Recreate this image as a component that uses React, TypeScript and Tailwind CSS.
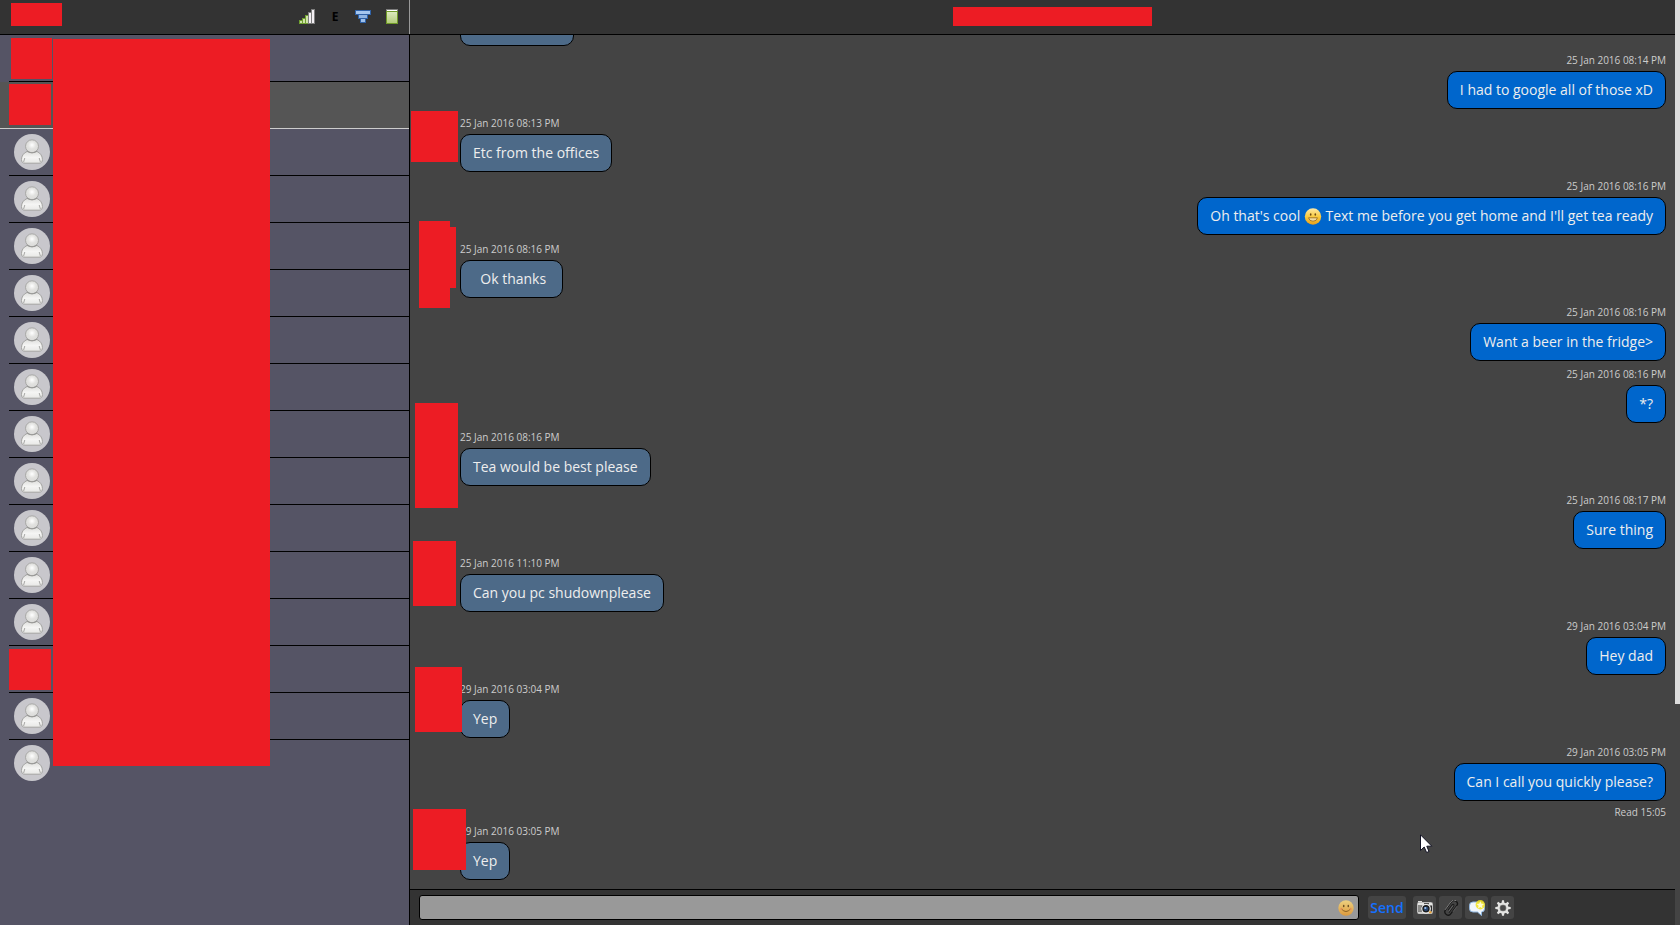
import React from "react";

type Block = { left: number; top: number; width: number; height: number };

type Message = {
  text: string;
  date: string;
  mine?: boolean;
  grouped?: boolean;
  read?: string;
  blocks?: Block[];
};

const messages: Message[] = [
  { text: "I had to google all of those xD", date: "25 Jan 2016 08:14 PM", mine: true },
  {
    text: "Etc from the offices",
    date: "25 Jan 2016 08:13 PM",
    blocks: [{ left: 1, top: -4, width: 47, height: 51 }],
  },
  {
    text: "Oh that's cool :D Text me before you get home and I'll get tea ready",
    date: "25 Jan 2016 08:16 PM",
    mine: true,
  },
  {
    text: "  Ok thanks ",
    date: "25 Jan 2016 08:16 PM",
    blocks: [
      { left: 9, top: -20, width: 31, height: 87 },
      { left: 9, top: -14, width: 37, height: 61 },
    ],
  },
  { text: "Want a beer in the fridge>", date: "25 Jan 2016 08:16 PM", mine: true },
  { text: "*?", date: "25 Jan 2016 08:16 PM", mine: true, grouped: true },
  {
    text: "Tea would be best please",
    date: "25 Jan 2016 08:16 PM",
    blocks: [{ left: 5, top: -26, width: 43, height: 105 }],
  },
  { text: "Sure thing", date: "25 Jan 2016 08:17 PM", mine: true },
  {
    text: "Can you pc shudownplease",
    date: "25 Jan 2016 11:10 PM",
    blocks: [{ left: 3, top: -14, width: 43, height: 65 }],
  },
  { text: "Hey dad", date: "29 Jan 2016 03:04 PM", mine: true },
  {
    text: "Yep",
    date: "29 Jan 2016 03:04 PM",
    blocks: [{ left: 5, top: -14, width: 47, height: 65 }],
  },
  { text: "Can I call you quickly please?", date: "29 Jan 2016 03:05 PM", mine: true, read: "Read 15:05" },
  {
    text: "Yep",
    date: "29 Jan 2016 03:05 PM",
    blocks: [{ left: 3, top: -14, width: 53, height: 61 }],
  },
];

// "hidden" contacts have their picture blocked out
const contacts = Array.from({ length: 16 }, (_, i) => ({
  id: i,
  hidden: i === 0 || i === 1 || i === 13,
  selected: i === 1,
}));

function SignalIcon() {
  const bars = [
    { x: 0, y: 11 },
    { x: 3, y: 9 },
    { x: 6, y: 6 },
    { x: 9, y: 3 },
    { x: 12, y: 0 },
  ];
  return (
    <svg width="16" height="16" viewBox="0 0 16 16" shapeRendering="crispEdges">
      {bars.map((b, i) => (
        <g key={b.x}>
          <rect x={b.x} y={b.y} width="4" height={15 - b.y} fill={i < 3 ? "#6f9f2f" : "#7e7e7e"} />
          <rect x={b.x + 1} y={b.y + 1} width="2" height={13 - b.y} fill={i < 3 ? "#cfe3a8" : "#f2eef2"} />
        </g>
      ))}
    </svg>
  );
}

function FunnelIcon() {
  return (
    <svg width="16" height="16" viewBox="0 0 16 16" shapeRendering="crispEdges">
      <rect x="5" y="9" width="6" height="5" fill="#2f62a8" />
      <rect x="6" y="10" width="4" height="3" fill="#9dc0ea" />
      <rect x="3" y="5" width="10" height="5" fill="#2f62a8" />
      <rect x="4" y="6" width="8" height="3" fill="#8fb4e2" />
      <rect x="0" y="1" width="16" height="5" fill="#2f62a8" />
      <rect x="1" y="2" width="14" height="3" fill="#a5c6ee" />
    </svg>
  );
}

function BatteryIcon() {
  return (
    <svg width="16" height="16" viewBox="0 0 16 16" shapeRendering="crispEdges">
      <defs>
        <linearGradient id="cell" x1="0" y1="0" x2="0" y2="1">
          <stop offset="0" stopColor="#dbe8bd" />
          <stop offset="1" stopColor="#b4cc7c" />
        </linearGradient>
      </defs>
      <rect x="3" y="0" width="12" height="3" fill="#7c7c7c" />
      <rect x="4" y="1" width="10" height="1" fill="#ffffff" />
      <rect x="3" y="2" width="12" height="13" fill="#709a28" />
      <rect x="4" y="3" width="10" height="11" fill="url(#cell)" />
    </svg>
  );
}

function Avatar() {
  return (
    <svg width="36" height="36" viewBox="0 0 36 36">
      <defs>
        <radialGradient id="head" cx="0.5" cy="0.4" r="0.6">
          <stop offset="0" stopColor="#ffffff" />
          <stop offset="0.5" stopColor="#e2e2e0" />
          <stop offset="1" stopColor="#dadad8" />
        </radialGradient>
        <linearGradient id="torso" x1="0" y1="0" x2="0" y2="1">
          <stop offset="0" stopColor="#dededc" />
          <stop offset="0.5" stopColor="#f5f5f4" />
          <stop offset="1" stopColor="#e8e8e6" />
        </linearGradient>
      </defs>
      <circle cx="18" cy="18" r="18" fill="#c8c7cc" />
      <path
        d="M13 17.5 C9.500 19 7.500 22 7.500 25.500 C7.500 28 8.500 29.200 11 29.200 H25 C27.400 29.200 28.400 28 28.400 25.500 C28.400 22 26.400 19 23 17.500 Z"
        fill="url(#torso)"
        stroke="#a4a4a2"
      />
      <path d="M10.800 24 L9.600 28 M25.200 24 L26.400 28" stroke="#a8a8a6" fill="none" />
      <circle cx="18" cy="12.300" r="6.500" fill="url(#head)" stroke="#a8a8a6" />
      <path d="M13 17 Q18 20.500 23 17" fill="none" stroke="#9a9a98" strokeWidth="1.200" />
    </svg>
  );
}

function GrinIcon() {
  return (
    <svg className="inline-block align-[-4px]" width="18" height="17" viewBox="0 0 18 17" role="img" aria-label="grin">
      <defs>
        <linearGradient id="grin" x1="0" y1="0" x2="0" y2="1">
          <stop offset="0" stopColor="#fde9a8" />
          <stop offset="0.550" stopColor="#f9c838" />
          <stop offset="1" stopColor="#e79f1c" />
        </linearGradient>
      </defs>
      <circle cx="9" cy="8.500" r="8.200" fill="url(#grin)" />
      <ellipse cx="6.700" cy="6.500" rx="0.800" ry="1.200" fill="#6b4a14" />
      <ellipse cx="11.300" cy="6.500" rx="0.800" ry="1.200" fill="#6b4a14" />
      <path d="M4.500 9.800 H13.500 Q12.700 13.200 9 13.200 Q5.300 13.200 4.500 9.800 Z" fill="#f3dca0" stroke="#94661c" strokeWidth="0.800" />
    </svg>
  );
}

function SmileIcon() {
  return (
    <svg width="16" height="16" viewBox="0 0 16 16">
      <defs>
        <linearGradient id="smile" x1="0" y1="0" x2="0" y2="1">
          <stop offset="0" stopColor="#ecd080" />
          <stop offset="1" stopColor="#dd9a3c" />
        </linearGradient>
      </defs>
      <circle cx="8" cy="8" r="7.700" fill="url(#smile)" />
      <ellipse cx="5.700" cy="6" rx="0.800" ry="1.300" fill="#6d5226" />
      <ellipse cx="10.300" cy="6" rx="0.800" ry="1.300" fill="#6d5226" />
      <path d="M3.500 9 Q8 14 12.500 9" fill="none" stroke="#8a6022" />
      <circle cx="3.400" cy="9" r="1.200" fill="#e8875a" opacity="0.600" />
      <circle cx="12.600" cy="9" r="1.200" fill="#e8875a" opacity="0.600" />
    </svg>
  );
}

function CameraIcon() {
  return (
    <svg width="16" height="16" viewBox="0 0 16 16">
      <rect x="1" y="1" width="4" height="2" fill="#dcdcdc" />
      <rect x="0.500" y="2.500" width="15" height="11" rx="1" fill="#2b2b2b" stroke="#bcbcbc" />
      <rect x="1" y="3" width="14" height="2.500" fill="#e4e4e2" />
      <rect x="7" y="3" width="5" height="1.500" fill="#555555" />
      <rect x="1" y="11.500" width="14" height="2" fill="#d0d0ce" />
      <rect x="1" y="5.500" width="3" height="6" fill="#8c8c8a" />
      <circle cx="9" cy="8.800" r="4.300" fill="#1b1b1b" stroke="#f2f2f2" strokeWidth="1.200" />
      <circle cx="9" cy="8.800" r="2.400" fill="#27456e" />
      <circle cx="8.300" cy="8" r="1.100" fill="#9fc3f0" />
      <circle cx="13.300" cy="12.200" r="1.200" fill="#e8a33a" />
    </svg>
  );
}

function ClipIcon() {
  return (
    <svg width="16" height="16" viewBox="0 0 16 16" fill="none">
      <g transform="rotate(36 8 8)">
        <rect x="4.700" y="-0.500" width="6.600" height="16.500" rx="3.300" stroke="#161616" strokeWidth="1.300" />
        <path d="M4.300 13 V3 Q4.300 -1 8 -1" stroke="#8a8a8a" strokeWidth="0.800" />
        <path d="M11.800 10 V3" stroke="#6c6c6c" strokeWidth="0.700" />
        <path d="M6.900 11.500 V5 Q6.900 3.600 8 3.600 Q9.100 3.600 9.100 5 V13" stroke="#1c1c1c" />
        <path d="M8.200 5 V12" stroke="#777777" strokeWidth="0.600" />
      </g>
    </svg>
  );
}

function NewChatIcon() {
  return (
    <svg width="16" height="16" viewBox="0 0 16 16">
      <path
        d="M4 2 H12 Q15.500 2 15.500 5.500 V8.500 Q15.500 12 12.500 12 L12.500 15.500 L8.500 12 H4 Q0.500 12 0.500 8.500 V5.500 Q0.500 2 4 2 Z"
        fill="#f1f6fc"
        stroke="#8fb6e0"
      />
      <circle cx="11.300" cy="4.800" r="4.700" fill="#f2e21c" opacity="0.850" />
      <path
        d="M11.300 1.200 L12.400 3.700 L15 4 L13 5.800 L13.600 8.400 L11.300 7 L9 8.400 L9.600 5.800 L7.600 4 L10.200 3.700 Z"
        fill="#fffbd0"
      />
    </svg>
  );
}

function GearIcon() {
  return (
    <svg width="16" height="16" viewBox="0 0 16 16">
      {[0, 45, 90, 135, 180, 225, 270, 315].map((a) => (
        <path key={a} d="M7 0.300 H9 L9.600 4 H6.400 Z" fill="#e4e4e2" transform={`rotate(${a} 8 8)`} />
      ))}
      <circle cx="8" cy="8" r="4.300" fill="none" stroke="#e4e4e2" strokeWidth="2.400" />
      <circle cx="8" cy="8" r="3.100" fill="#4b4b4b" stroke="#8e8e8c" strokeWidth="0.600" />
    </svg>
  );
}

function ToolButton({ label, children }: { label: string; children: React.ReactNode }) {
  return (
    <button
      type="button"
      aria-label={label}
      className="flex size-[23px] shrink-0 items-center justify-center rounded-[3px] bg-[#444444]"
    >
      {children}
    </button>
  );
}

function MessageRow({ message }: { message: Message }) {
  const { text, date, mine, grouped, read, blocks = [] } = message;
  const parts = text.split(":D");
  return (
    <li
      className={`relative flex shrink-0 flex-col pr-[9px] pl-[50px] ${mine ? "items-end" : "items-start"} ${
        grouped ? "mt-[5px]" : "mt-[6px]"
      }`}
    >
      <span className="text-[10px] leading-4 text-[#cccccc]">{date}</span>
      <p
        className={`mt-[3px] h-[38px] rounded-[10px] border border-black px-3 pt-2 text-[14px] leading-5 whitespace-pre text-[#eeeeee] ${
          mine ? "bg-[#0066cc]" : "bg-[#4d6a88]"
        }`}
      >
        {parts[0]}
        {parts.length > 1 && <GrinIcon />}
        {parts[1]}
      </p>
      {read && <span className="pt-[6px] text-[10px] leading-[10px] text-[#cccccc]">{read}</span>}
      {blocks.map((b, i) => (
        <span key={i} className="absolute bg-[#ed1c24]" style={b} />
      ))}
    </li>
  );
}

export default function App() {
  return (
    <div className="relative flex h-screen overflow-hidden bg-[#444444] font-['Open_Sans','Noto_Sans',sans-serif]">
      <aside className="flex w-[410px] shrink-0 flex-col">
        <header className="flex h-[35px] shrink-0 items-start justify-between border-b border-black bg-[#333333]">
          <div className="mt-[3px] ml-[11px] h-[23px] w-[51px] bg-[#ed1c24]" />
          <div className="flex h-[34px] items-center gap-3 border-r border-[#999999] pr-[10px]">
            <SignalIcon />
            <span className="w-4 text-center text-[12px] leading-4 font-bold text-black">E</span>
            <FunnelIcon />
            <BatteryIcon />
          </div>
        </header>
        <div className="relative flex-1 border-r border-black bg-[#555465]">
          <ul>
            {contacts.map((c, i) => (
              <li
                key={c.id}
                className={`h-[47px] ${c.selected ? "border-b border-[#cccccc] bg-[#555555]" : ""}`}
              >
                <div
                  className={`ml-[9px] h-full ${
                    c.selected || i === contacts.length - 1 ? "" : "border-b border-black"
                  }`}
                >
                  {c.hidden ? (
                    <div className={i === 0 ? "pt-[3px] pl-[2px]" : c.selected ? "pt-[2px]" : "pt-[3px]"}>
                      <div className={`h-[41px] bg-[#ed1c24] ${i === 0 ? "w-[41px]" : "w-[42px]"}`} />
                    </div>
                  ) : (
                    <div className="pt-[5px] pl-[5px]">
                      <Avatar />
                    </div>
                  )}
                </div>
              </li>
            ))}
          </ul>
          <div className="absolute top-1 left-[53px] h-[727px] w-[217px] bg-[#ed1c24]" />
        </div>
      </aside>

      <main className="flex min-w-0 flex-1 flex-col">
        <header className="flex h-[35px] shrink-0 items-center justify-center border-b border-black bg-[#333333] pb-px pl-5">
          <div className="h-[19px] w-[199px] bg-[#ed1c24]" />
        </header>
        <ul className="flex min-h-0 flex-1 flex-col justify-end overflow-hidden pb-[9px]">
          <li className="ml-[50px] h-[38px] w-[114px] shrink-0 rounded-[10px] border border-black bg-[#4d6a88]" />
          {messages.map((m, i) => (
            <MessageRow key={i} message={m} />
          ))}
        </ul>
        <form
          className="flex h-9 shrink-0 items-center border-t border-black bg-[#333333] pr-[161px] pl-[9px]"
          onSubmit={(e) => e.preventDefault()}
        >
          <div className="flex h-[25px] min-w-0 flex-1 items-center rounded-[3px] border border-black bg-[#999999] pr-1">
            <input
              type="text"
              aria-label="Message"
              className="h-full min-w-0 flex-1 bg-transparent px-2 text-[14px] outline-none"
            />
            <button type="button" aria-label="Insert emoji">
              <SmileIcon />
            </button>
          </div>
          <button
            type="submit"
            className="ml-[9px] h-[23px] w-[38px] rounded-[3px] bg-[#444444] text-center text-[14px] leading-5 font-semibold text-[#1470ff]"
          >
            Send
          </button>
          <div className="ml-[7px] flex gap-[3px]">
            <ToolButton label="Send photo">
              <CameraIcon />
            </ToolButton>
            <ToolButton label="Attach file">
              <ClipIcon />
            </ToolButton>
            <ToolButton label="New conversation">
              <NewChatIcon />
            </ToolButton>
            <ToolButton label="Settings">
              <GearIcon />
            </ToolButton>
          </div>
        </form>
      </main>

      <div className="w-[5px] shrink-0">
        <div className="h-[704px] bg-[#dcdcdc]" />
      </div>

      <svg className="absolute top-[834px] left-[1420px]" width="13" height="20" viewBox="0 0 13 20">
        <path
          d="M0.500 0.800 V16.500 L4.200 13 L6.600 18.500 L9 17.500 L6.800 12.200 H11.800 Z"
          fill="#ffffff"
          stroke="#111122"
        />
      </svg>
    </div>
  );
}
